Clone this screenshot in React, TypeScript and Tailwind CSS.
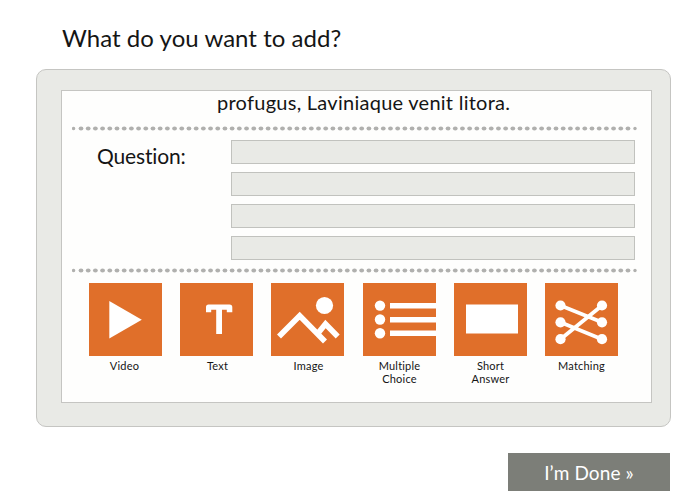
import type { ReactNode } from 'react';
import clsx from 'clsx';

const dots = Array.from({ length: 77 }, (_, i) => 9 + i * 7.197);

function DottedRule() {
  return (
    <svg className="block h-[5px] w-[566px] shrink-0 fill-[#b0b0ae]" viewBox="0 0 566 5">
      <circle cx="1.6" cy="2.5" r="1.7" />
      {dots.map((x) => (
        <ellipse key={x} cx={x} cy="2.5" rx="2.4" ry="2.1" />
      ))}
      <circle cx="563" cy="2.5" r="1.7" />
    </svg>
  );
}

function Tile({ label, className, labelClass, children }: { label: ReactNode; className?: string; labelClass?: string; children: ReactNode }) {
  return (
    <button className={clsx('flex w-[73px] flex-col items-center', className)}>
      <svg className="block size-[73px] bg-[#e06f2a] fill-white stroke-none" viewBox="0 0 73 73">
        {children}
      </svg>
      <span className={clsx('mt-[3px] text-center text-[11px] leading-[13px] tracking-[0.2px] whitespace-nowrap', labelClass)}>{label}</span>
    </button>
  );
}

export default function App() {
  return (
    <main className="flex h-[500px] w-[700px] flex-col overflow-hidden bg-white font-['Lato','Open_Sans',sans-serif] text-[#151515]">
      <h1 className="mt-[23px] ml-[62px] h-[46px] text-[24px] leading-[30px] tracking-[0.04px] whitespace-nowrap">
        <span>What do you want to add?</span>
      </h1>
      <section className="ml-[36px] h-[358px] w-[635px] shrink-0 rounded-[10px] border border-[#c5c5c2] bg-[#e9eae6] pt-[20px] pl-[24px]">
        <div className="flex h-[313px] w-[591px] flex-col border border-[#c5c5c2] bg-[#fefefd]">
          <p className="h-[35px] pl-[155px] text-[20px] leading-[22px] tracking-[0.26px] whitespace-nowrap">
            <span>profugus, Laviniaque venit litora.</span>
          </p>
          <div className="pl-[10px]"><DottedRule /></div>
          <div className="mt-[9px] flex h-[120px]">
            <label className="w-[169px] pt-[4px] pl-[35px] text-[21px] leading-[24px] tracking-[-0.15px]">
              <span>Question:</span>
            </label>
            <div className="flex w-[404px] flex-col gap-[8px]">
              {[0, 1, 2, 3].map((i) => (
                <div key={i} className="h-[24px] border border-[#c1c2be] bg-[#e9eae6]" />
              ))}
            </div>
          </div>
          <div className="mt-[8px] pl-[10px]"><DottedRule /></div>
          <div className="mt-[10px] ml-[27px] flex gap-[18px]">
            <Tile label="Video" labelClass="-ml-0.5">
              <path d="M20.3 18v37.5l32.5-18.7z" />
            </Tile>
            <Tile label="Text" labelClass="ml-0.5">
              <path d="M28.5 21.5H49.5Q52.3 21.5 52.3 24.3V29.2H46.8V26.8H42V51H36.2V26.8H31.2V29.2H26V24Q26 21.5 28.5 21.5Z" />
            </Tile>
            <Tile label="Image" labelClass="ml-0.5">
              <circle cx="53.5" cy="22.5" r="8.6" />
              <path d="M8 53.5 28.7 32.7 54 58.5M48 49 54.5 41 66.7 53.5" fill="none" stroke="white" strokeWidth="5.6" />
            </Tile>
            <Tile className="ml-px" label={<>Multiple<br />Choice</>}>
              <circle cx="17" cy="22.6" r="5.2" />
              <circle cx="17" cy="36.5" r="5.2" />
              <circle cx="17" cy="50.2" r="5.2" />
              <path d="M27 20h46v5.5H27zM27 34h46v5.5H27zM27 47.5h46V53H27z" />
            </Tile>
            <Tile label={<>Short<br />Answer</>}>
              <path d="M12 21.5h52v29H12z" />
            </Tile>
            <Tile label="Matching">
              <path d="M15.5 22.5 57 39.3M15.5 39.3 57 56.2M15.5 56.2 57 22.5" fill="none" stroke="white" strokeWidth="3.8" />
              {[22.5, 39.3, 56.2].map((y) => (
                <g key={y}>
                  <circle cx="15.5" cy={y} r="5.1" />
                  <circle cx="57" cy={y} r="5.1" />
                </g>
              ))}
            </Tile>
          </div>
        </div>
      </section>
      <button className="mt-[26px] ml-[508px] h-[38px] w-[162px] shrink-0 bg-[#7c7e78] pt-[2px] text-[19px] tracking-[0.1px] text-white">
        <span>I’m Done »</span>
      </button>
    </main>
  );
}
